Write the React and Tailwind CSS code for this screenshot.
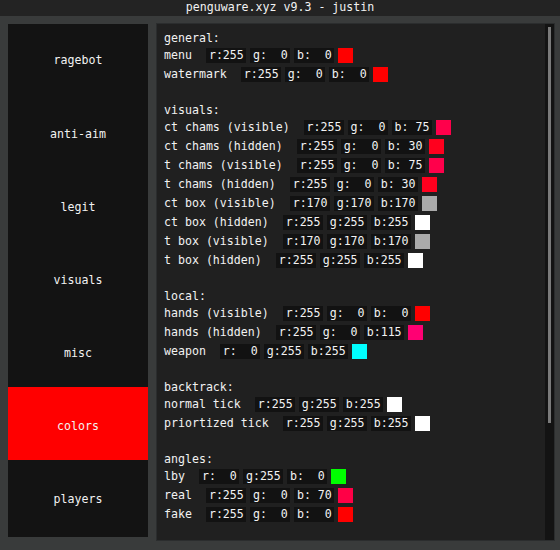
const groups = [
  {
    title: 'general:',
    rows: [
      ['menu', 255, 0, 0],
      ['watermark', 255, 0, 0],
    ],
  },
  {
    title: 'visuals:',
    rows: [
      ['ct chams (visible)', 255, 0, 75],
      ['ct chams (hidden)', 255, 0, 30],
      ['t chams (visible)', 255, 0, 75],
      ['t chams (hidden)', 255, 0, 30],
      ['ct box (visible)', 170, 170, 170],
      ['ct box (hidden)', 255, 255, 255],
      ['t box (visible)', 170, 170, 170],
      ['t box (hidden)', 255, 255, 255],
    ],
  },
  {
    title: 'local:',
    rows: [
      ['hands (visible)', 255, 0, 0],
      ['hands (hidden)', 255, 0, 115],
      ['weapon', 0, 255, 255],
    ],
  },
  {
    title: 'backtrack:',
    rows: [
      ['normal tick', 255, 255, 255],
      ['priortized tick', 255, 255, 255],
    ],
  },
  {
    title: 'angles:',
    rows: [
      ['lby', 0, 255, 0],
      ['real', 255, 0, 70],
      ['fake', 255, 0, 0],
    ],
  },
];

const tabs = ['ragebot', 'anti-aim', 'legit', 'visuals', 'misc', 'colors', 'players'];

const pad = (n) => String(n).padStart(3, ' ');

function ValueBox({ ch, value }) {
  return (
    <div className="w-[40px] h-[15px] bg-[#121212] pl-[3px] flex items-center whitespace-pre leading-none">
      {ch}:{pad(value)}
    </div>
  );
}

function ColorRow({ label, r, g, b }) {
  return (
    <div className="h-[19px] flex items-center">
      <span className="whitespace-pre">{label + '  '}</span>
      <div className="flex items-center gap-[4px]">
        <ValueBox ch="r" value={r} />
        <ValueBox ch="g" value={g} />
        <ValueBox ch="b" value={b} />
        <div className="w-[15px] h-[15px]" style={{ backgroundColor: `rgb(${r},${g},${b})` }} />
      </div>
    </div>
  );
}

export default function App() {
  return (
    <div
      className="w-[560px] h-[550px] bg-[#393b3b] text-[#f2f2f2] text-[11.6px] overflow-hidden flex flex-col"
      style={{ fontFamily: '"DejaVu Sans Mono", "Liberation Mono", monospace' }}
    >
      <div className="h-[16px] bg-[#232323] flex items-center justify-center whitespace-pre leading-none">
        penguware.xyz v9.3 - justin
      </div>

      <div className="flex items-start pl-2 gap-2">
        <div className="mt-[8px] w-[140px] h-[513px] bg-[#131313] flex flex-col">
          {tabs.map((t, i) => (
            <div
              key={t}
              className={`flex items-center justify-center ${
                i === 0 ? 'h-[71px] pt-[3px]' : i === tabs.length - 1 ? 'flex-1 pt-[2px]' : 'h-[73px] pt-[6px]'
              } ${t === 'colors' ? 'bg-[#ff0000]' : ''}`}
            >
              {t}
            </div>
          ))}
        </div>

        <div className="mt-[7px] w-[399px] h-[518px] bg-[#202020] border border-[#2b2d2e] flex">
          <div className="flex-1 pl-[7px] pt-[7px] flex flex-col gap-[19px]">
            {groups.map((grp) => (
              <div key={grp.title} className="flex flex-col">
                <div className="h-[15px] flex items-center">{grp.title}</div>
                {grp.rows.map(([label, r, g, b]) => (
                  <ColorRow key={label} label={label} r={r} g={g} b={b} />
                ))}
              </div>
            ))}
          </div>
          <div className="w-[9px] bg-[#131313] pl-[3px] pt-[3px]">
            <div className="w-[3px] h-[396px] bg-[#7a7a7a]" />
          </div>
        </div>
      </div>
    </div>
  );
}
